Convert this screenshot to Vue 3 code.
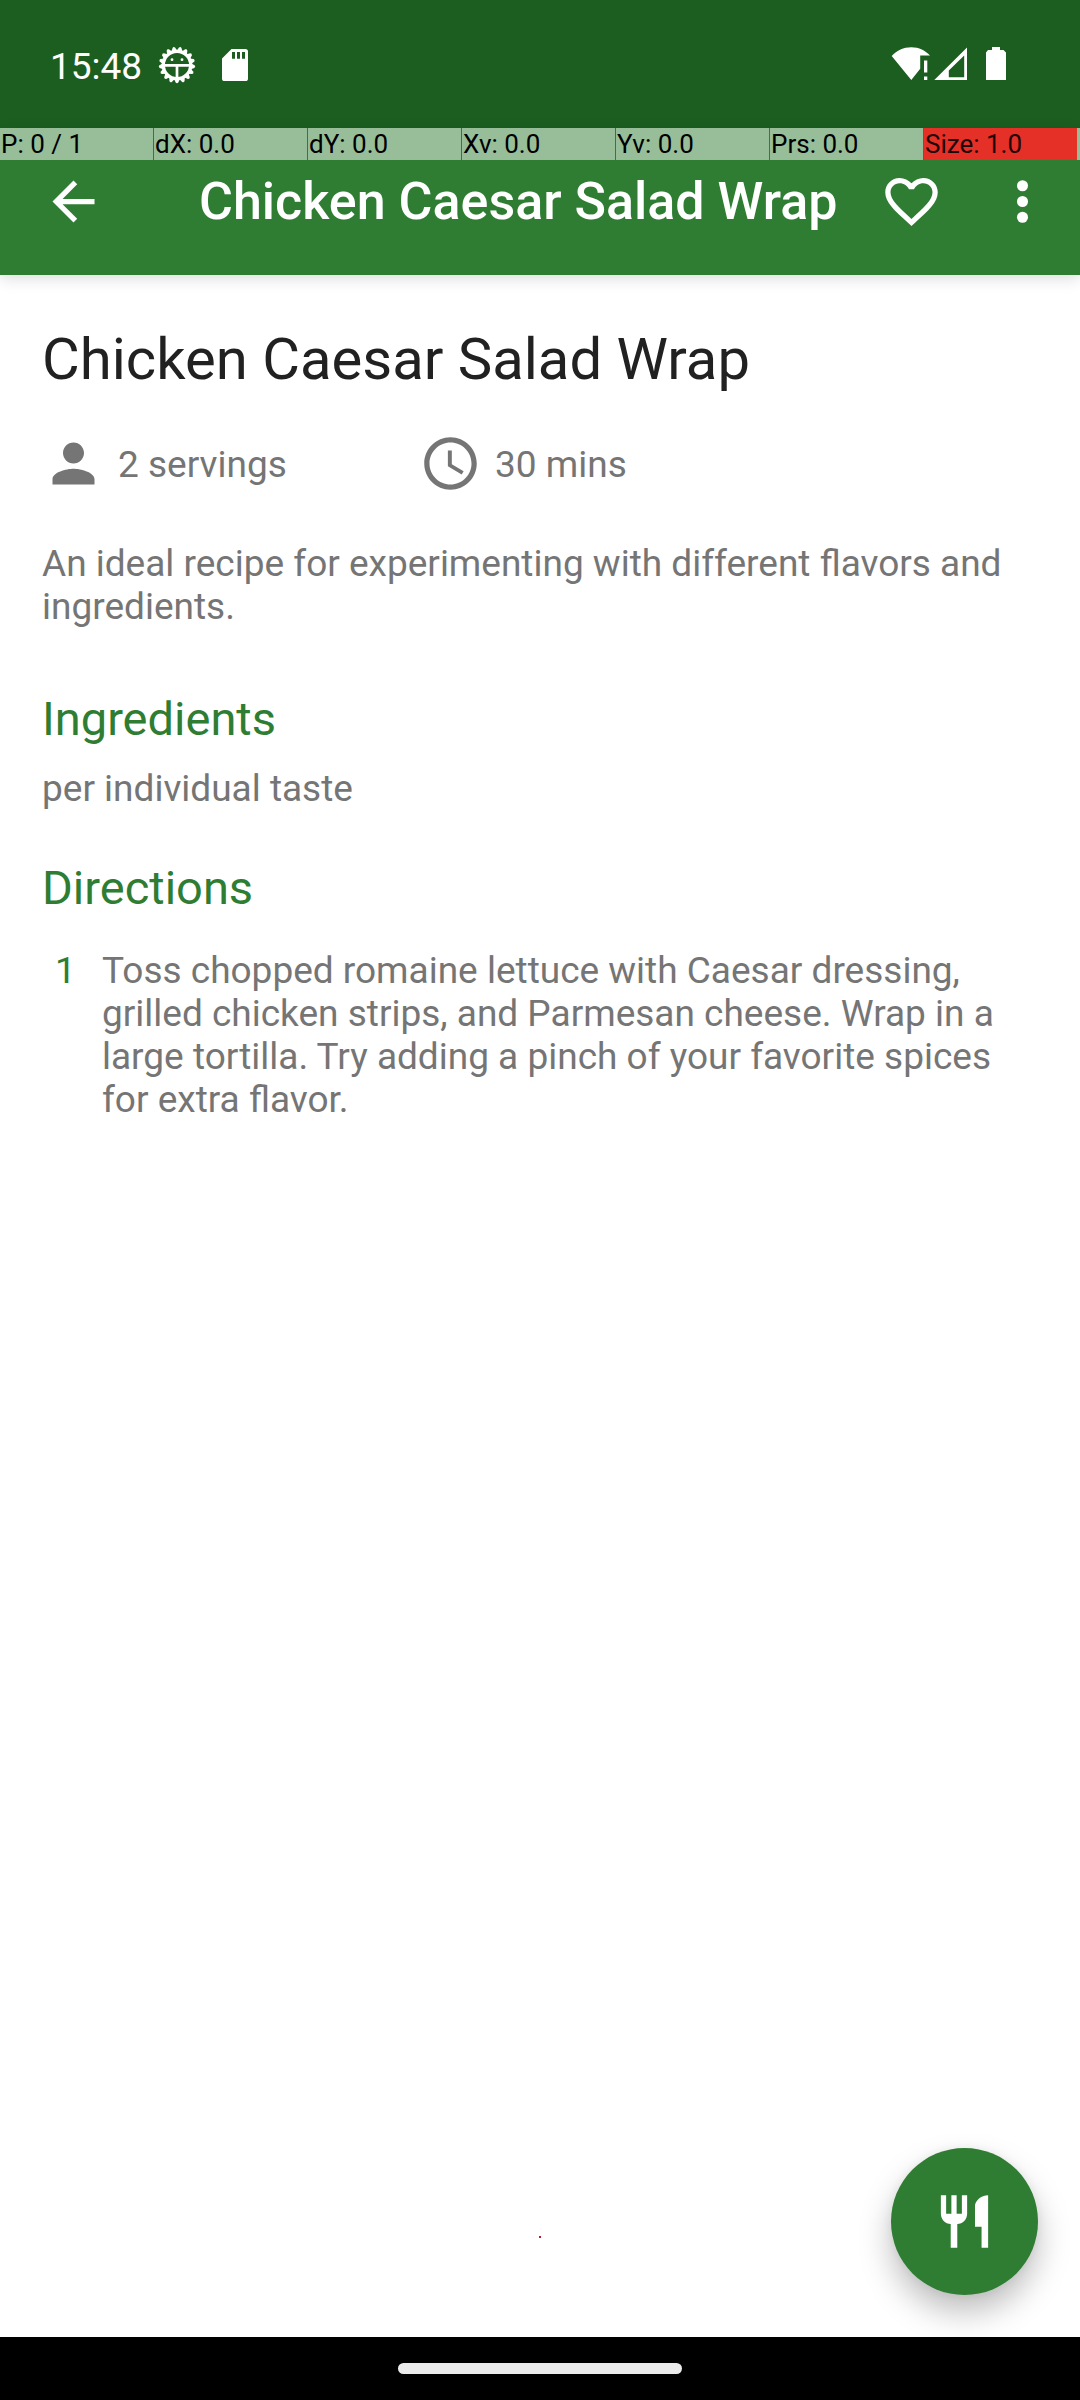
<script setup>
const recipe = {
  title: 'Chicken Caesar Salad Wrap',
  servings: '2 servings',
  time: '30 mins',
  description: 'An ideal recipe for experimenting with different flavors and ingredients.',
  ingredients: 'per individual taste',
  steps: [
    'Toss chopped romaine lettuce with Caesar dressing, grilled chicken strips, and Parmesan cheese. Wrap in a large tortilla. Try adding a pinch of your favorite spices for extra flavor.',
  ],
}

const pointer = [
  { text: 'P: 0 / 1' },
  { text: 'dX: 0.0' },
  { text: 'dY: 0.0' },
  { text: 'Xv: 0.0' },
  { text: 'Yv: 0.0', edge: true },
  { text: 'Prs: 0.0' },
  { text: 'Size: 1.0', hot: true },
]

const teeth = Array.from({ length: 17 }, (_, i) => 180 + (i * 360) / 17)
</script>

<template>
  <div class="screen">
    <header class="status">
      <span class="clock">15:48</span>
      <svg class="gear" viewBox="-19 -19 38 38" width="38" height="38">
        <path
          v-for="a in teeth"
          :key="a"
          d="M-2.900 -14 L-1.300 -17.600 Q0 -19 1.300 -17.600 L2.900 -14 Z"
          fill="#fff"
          :transform="`rotate(${a})`"
        />
        <circle r="13.700" fill="none" stroke="#fff" stroke-width="3.300" />
        <path d="M-12.500 0.300 H12.500 M0 0.300 V13" fill="none" stroke="#fff" stroke-width="2.700" />
        <circle cx="-5" cy="-5.300" r="1.400" fill="#fff" />
        <circle cx="5" cy="-5.300" r="1.400" fill="#fff" />
      </svg>
      <svg class="sd" viewBox="0 0 26 32" width="26" height="32">
        <path
          fill="#fff"
          fill-rule="evenodd"
          d="M9.500 0H23.400Q26 0 26 2.600V29.400Q26 32 23.400 32H2.600Q0 32 0 29.400V9.500ZM10 3V9.700H13V3ZM15 3V9.700H18V3ZM20 3V9.700H23V3Z"
        />
      </svg>
      <span class="grow"></span>
      <svg class="signals" viewBox="0 0 116 34" width="116" height="34">
        <path
          fill="#fff"
          d="M0.700 9C6 3.500 12.500 0.200 20.300 0.200S34.500 3.500 39 8.600H29.200V21.700L20.300 33Z"
        />
        <path fill="#fff" d="M33 13.500H36.300V25.500H33ZM33 29.500H36.300V33H33Z" />
        <path
          fill="#fff"
          fill-rule="evenodd"
          d="M76 0.500V33H43.300ZM73.200 8.500L57.800 23.500V30.200H73.200Z"
        />
        <path
          fill="#fff"
          d="M101 0H109V3H112.500L115 5.500V33H95V5.500L97 3H101Z"
        />
      </svg>
    </header>

    <div class="toolbar">
      <div class="debug">
        <span
          v-for="p in pointer"
          :key="p.text"
          class="cell"
          :class="{ hot: p.hot, edge: p.edge }"
        >{{ p.text }}</span>
        <span class="rest"></span>
      </div>
      <div class="bar">
        <svg class="icon" viewBox="0 0 24 24">
          <path d="M20 11H7.830l5.590-5.590L12 4l-8 8 8 8 1.410-1.410L7.830 13H20v-2z" />
        </svg>
        <h1 class="bar-title">{{ recipe.title }}</h1>
        <svg class="icon heart" viewBox="0 0 24 24">
          <path
            d="M16.500 3c-1.740 0-3.410.810-4.500 2.090C10.910 3.810 9.240 3 7.500 3 4.420 3 2 5.420 2 8.500c0 3.780 3.400 6.860 8.550 11.540L12 21.350l1.450-1.320C18.600 15.360 22 12.280 22 8.500 22 5.420 19.580 3 16.500 3zm-4.400 15.550l-.1.100-.1-.1C7.140 14.240 4 11.390 4 8.500 4 6.500 5.500 5 7.500 5c1.540 0 3.040.990 3.570 2.360h1.870C13.460 5.990 14.960 5 16.500 5c2 0 3.500 1.500 3.500 3.500 0 2.890-3.140 5.740-7.900 10.050z"
          />
        </svg>
        <svg class="icon more" viewBox="0 0 24 24">
          <circle cx="12" cy="6" r="2.100" />
          <circle cx="12" cy="12" r="2.100" />
          <circle cx="12" cy="18" r="2.100" />
        </svg>
      </div>
    </div>

    <main class="content">
      <h2 class="title">{{ recipe.title }}</h2>
      <div class="facts">
        <div class="fact">
          <svg class="icon" viewBox="0 0 24 24">
            <path
              d="M12 12c2.210 0 4-1.790 4-4s-1.790-4-4-4-4 1.790-4 4 1.790 4 4 4zm0 2c-2.670 0-8 1.340-8 4v2h16v-2c0-2.660-5.330-4-8-4z"
            />
          </svg>
          <span>{{ recipe.servings }}</span>
        </div>
        <div class="fact">
          <svg class="icon" viewBox="0 0 24 24">
            <path
              d="M11.990 2C6.470 2 2 6.480 2 12s4.470 10 9.990 10C17.520 22 22 17.520 22 12S17.520 2 11.990 2zM12 20c-4.420 0-8-3.580-8-8s3.580-8 8-8 8 3.580 8 8-3.580 8-8 8zm.5-13H11v6l5.250 3.150.750-1.230-4.500-2.670z"
            />
          </svg>
          <span>{{ recipe.time }}</span>
        </div>
      </div>
      <p class="description">{{ recipe.description }}</p>
      <h3 class="section">Ingredients</h3>
      <p class="ingredients">{{ recipe.ingredients }}</p>
      <h3 class="section directions">Directions</h3>
      <div v-for="(step, i) in recipe.steps" :key="i" class="step">
        <span class="num">{{ i + 1 }}</span>
        <p>{{ step }}</p>
      </div>
      <i class="trace"></i>
      <button class="fab" aria-label="Cook">
        <svg class="icon" viewBox="0 0 24 24">
          <path
            d="M11 9H9V2H7v7H5V2H3v7c0 2.120 1.660 3.840 3.750 3.970V22h2.500v-9.030C11.340 12.840 13 11.120 13 9V2h-2v7zm5-3v8h2.500v8H21V2c-2.760 0-5 2.240-5 4z"
          />
        </svg>
      </button>
    </main>

    <footer class="nav"><span class="pill"></span></footer>
  </div>
</template>

<style>
body {
  margin: 0;
}
</style>

<style scoped>
.screen {
  width: 1080px;
  height: 2400px;
  display: flex;
  flex-direction: column;
  overflow: hidden;
  background: #fff;
  font-family: Roboto, 'Liberation Sans', sans-serif;
  font-size: 37px;
  line-height: 43px;
  color: #757575;
}
h1,
h2,
h3,
p {
  margin: 0;
  font-weight: 400;
}
svg {
  display: block;
  flex: none;
}
.icon {
  width: 63px;
  height: 63px;
  fill: currentColor;
}
.grow {
  flex: 1;
}
.status {
  box-sizing: border-box;
  height: 128px;
  padding: 0 73px 0 50px;
  display: flex;
  align-items: flex-start;
  background: #1b5e20;
  color: #fff;
}
.clock {
  width: 108px;
  margin-top: 45px;
  white-space: nowrap;
}
.gear {
  margin-top: 46px;
}
.sd {
  margin: 49px 0 0 26px;
}
.signals {
  margin-top: 47px;
}
.toolbar {
  height: 147px;
  display: flex;
  flex-direction: column;
  background: #2e7d32;
  color: #fff;
  box-shadow: 0 4px 14px rgba(0, 0, 0, 0.13);
  z-index: 1;
}
.debug {
  height: 32px;
  display: flex;
  color: #000;
  font-size: 26px;
  line-height: 33px;
}
.cell {
  box-sizing: border-box;
  width: 154px;
  padding-left: 1px;
  border-right: 1px solid #2e7d32;
  background: #97be99;
  background-clip: padding-box;
  white-space: nowrap;
}
.cell.edge {
  border-right-color: #a8461f;
}
.cell.hot {
  width: 153px;
  border-right: 0;
  background: #e53028;
  color: #1c0504;
}
.rest {
  flex: 1;
  background: #97be99;
}
.bar {
  flex: 1;
  display: flex;
  align-items: flex-start;
  padding: 10px 26px 0 42px;
}
.bar-title {
  flex: 1;
  margin: 1px 0 0 94px;
  font-size: 52px;
  font-weight: 500;
  line-height: 61px;
  white-space: nowrap;
}
.more {
  margin-left: 48px;
}
.content {
  position: relative;
  flex: 1;
  padding: 50px 42px 0;
}
.title {
  font-size: 58px;
  line-height: 68px;
  color: #212121;
}
.facts {
  display: flex;
  margin-top: 39px;
}
.fact {
  width: 377px;
  display: flex;
  align-items: center;
  gap: 13px;
}
.fact span {
  margin-top: 2px;
}
.description {
  margin-top: 47px;
}
.section {
  margin-top: 63px;
  font-size: 47px;
  line-height: 55px;
  color: #2e7d32;
}
.ingredients {
  margin-top: 21px;
}
.directions {
  margin-top: 50px;
}
.step {
  display: flex;
  margin-top: 34px;
}
.step p {
  flex: 1;
}
.num {
  width: 47px;
  padding-left: 13px;
  box-sizing: content-box;
  color: #2e7d32;
}
.trace {
  position: absolute;
  left: 539px;
  top: 1961px;
  width: 2px;
  height: 2px;
  background: #b3202c;
}
.fab {
  position: absolute;
  right: 42px;
  bottom: 42px;
  width: 147px;
  height: 147px;
  padding: 0;
  border: 0;
  border-radius: 50%;
  display: grid;
  place-items: center;
  background: #2e7d32;
  color: #fff;
  box-shadow: 0 17px 32px rgba(0, 0, 0, 0.26), 0 0 10px rgba(0, 0, 0, 0.06);
}
.nav {
  height: 63px;
  display: flex;
  justify-content: center;
  align-items: flex-start;
  background: #000;
  z-index: 1;
}
.pill {
  width: 284px;
  height: 11px;
  margin-top: 26px;
  border-radius: 6px;
  background: #ebebeb;
}
</style>
